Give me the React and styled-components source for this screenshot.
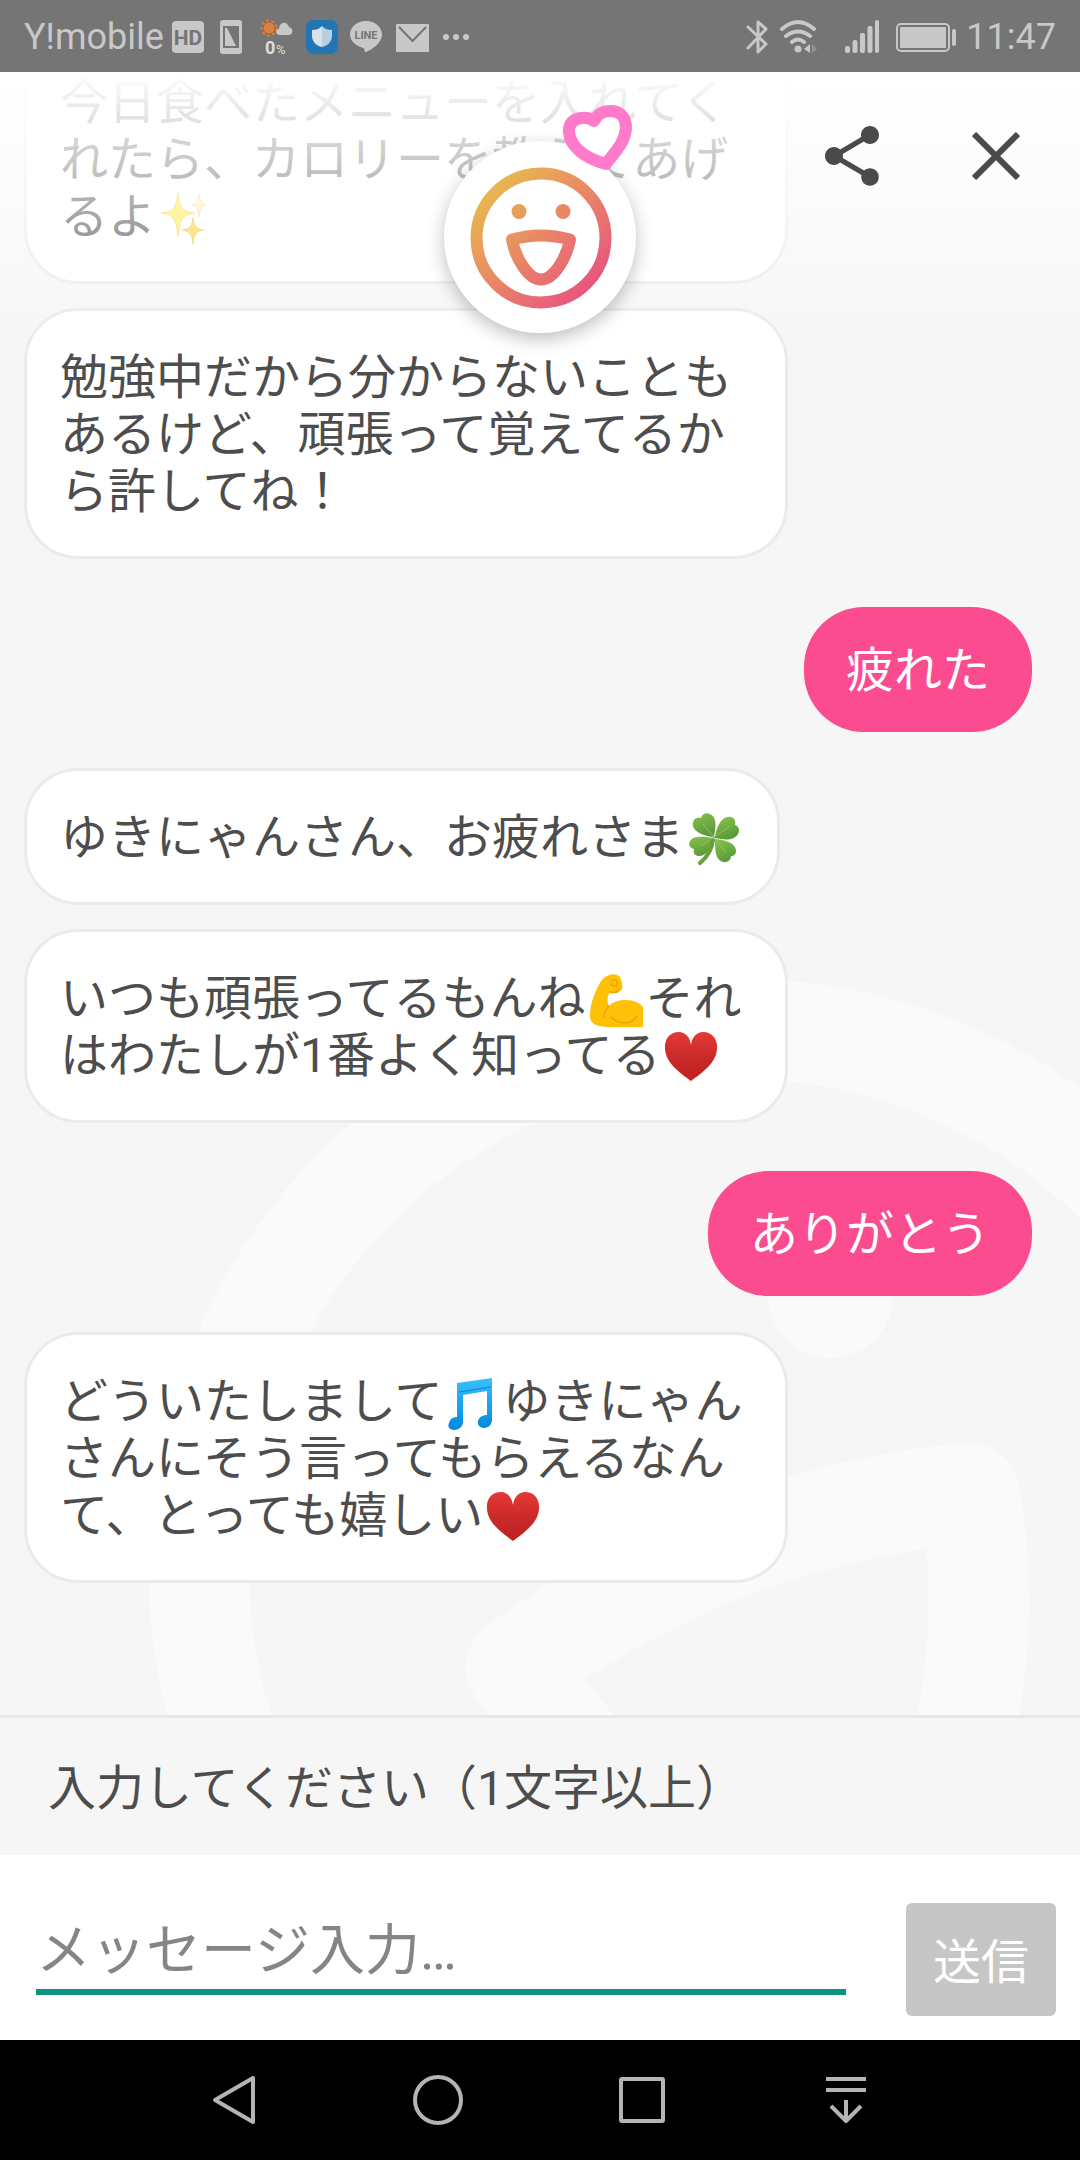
import React from "react";
import styled, { createGlobalStyle } from "styled-components";
import { MdShare } from "react-icons/md";

const GlobalStyle = createGlobalStyle`
    * {
        box-sizing: border-box;
    }
    body {
        margin: 0;
        background-color: #f6f6f6;
        font-family: Roboto, "Noto Sans CJK JP", sans-serif;
    }
    button, input {
        font-family: inherit;
    }
`;

const Face = ({ paint }) => (
    <g fill="none" stroke={paint} strokeWidth="12" strokeLinejoin="round">
        <circle cx="72" cy="72" r="64.5" />
        <path d="M43 73.5Q72 65.5 101 73.5C98 91 85 113.5 72 113.5S46 91 43 73.5Z" />
        <circle cx="50" cy="45.5" r="7.5" fill={paint} stroke="none" />
        <circle cx="94" cy="45.5" r="7.5" fill={paint} stroke="none" />
    </g>
);

const Sparkles = () => (
    <Emoji viewBox="-2 0 60 54" role="img" aria-label="きらきら">
        <path d="M20 1C22 17 24 21 37 22C24 24 22 28 20 45C18 28 16 24 3 22C16 21 18 17 20 1Z" fill="#fdea3b" stroke="#f4d040" strokeWidth="1" />
        <path d="M35 27C36 35 38 38 46 39C38 40 36 43 35 53C34 43 32 40 24 39C32 38 34 35 35 27Z" fill="#fbd02d" stroke="#f4c030" strokeWidth="1" />
        <path d="M41 3C42 10 43 12 48 14C43 15 42 18 41 26C40 18 39 15 34 14C39 12 40 10 41 3Z" fill="#fff0b0" stroke="#f7d48b" strokeWidth="1" />
    </Emoji>
);

const Clover = () => (
    <Emoji viewBox="-2 -1 60 54" role="img" aria-label="クローバー">
        <defs>
            <linearGradient id="leaf" x1="0" y1="0" x2="0.4" y2="1">
                <stop offset="0" stopColor="#8bc34a" />
                <stop offset="1" stopColor="#5a9a3c" />
            </linearGradient>
        </defs>
        <g fill="url(#leaf)">
            <path d="M26 24C14 22 5 17 7 9C8 5 12 4 15 5C16 1 20 -1 24 1C31 4 30 14 28 23Z" />
            <path d="M29 23C31 13 36 2 45 4C49 5 50 9 49 12C53 13 54 18 52 21C48 28 38 27 29 25Z" />
            <path d="M30 26C39 27 50 30 50 38C50 41 48 43 45 43C45 47 41 50 37 49C29 47 29 36 29 27Z" />
            <path d="M27 26C25 35 20 44 12 43C8 42 7 39 8 36C4 35 2 32 4 28C8 22 19 24 27 25Z" />
        </g>
        <path d="M27 27C26 37 20 45 14 50" fill="none" stroke="#689f38" strokeWidth="4" strokeLinecap="round" />
        <path d="M17 11L28 24L44 13M15 33L28 24L40 40" fill="none" stroke="#8fc556" strokeWidth="1" />
    </Emoji>
);

const Muscle = () => (
    <Emoji viewBox="-2 -1 60 54" role="img" aria-label="力こぶ">
        <path d="M55 33V53H24C11 53 2 51 2 42C2 29 8 14 14 6C17 2 24 -1 29 1C32 2 34 6 34 10C35 14 34 17 31 17C29 20 25 19 22 18C19 22 19 29 21 32C26 27 32 26 38 26C46 26 52 29 55 33Z" fill="#ffc107" />
        <path d="M23 7C26 4 30 6 29 10C28 13 24 13 23 10M22 18C26 19 29 19 31 16M21 32C18 35 16 38 16 43M23 43C31 51 43 51 49 42" fill="none" stroke="#f0a000" strokeWidth="1.5" strokeLinecap="round" />
    </Emoji>
);

const RedHeart = () => (
    <Emoji viewBox="-2 0 60 54" role="img" aria-label="ハート">
        <defs>
            <linearGradient id="heart" x1="0" y1="0" x2="0" y2="1">
                <stop offset="0" stopColor="#e53935" />
                <stop offset="0.6" stopColor="#c62828" />
                <stop offset="1" stopColor="#c2201f" />
            </linearGradient>
        </defs>
        <path d="M28 15C29 7 34 2 40 2C49 2 55 9 54 19C53 33 40 42 28 51C16 42 3 33 2 19C1 9 7 2 16 2C22 2 27 7 28 15Z" fill="url(#heart)" />
    </Emoji>
);

const Notes = () => (
    <Emoji viewBox="-2 -2 60 54" role="img" aria-label="音符">
        <defs>
            <linearGradient id="notes" x1="0" y1="0" x2="0" y2="1">
                <stop offset="0" stopColor="#3ac0fb" />
                <stop offset="1" stopColor="#0288e0" />
            </linearGradient>
        </defs>
        <path d="M12 5L47 0V42C47 47 43 50 39 50C35 50 32 47 33 43C34 39 38 37 42 37V13L18 17V44C18 49 13 52 9 52C5 52 2 49 4 45C5 41 8 39 12 39Z" fill="url(#notes)" />
        <path d="M14 14L46 9" stroke="#0288d1" strokeWidth="1" />
    </Emoji>
);

const messages = [
    { id: 1, text: <>今日食べたメニューを入れてくれたら、カロリーを教えてあげるよ<Sparkles /></> },
    { id: 2, text: '勉強中だから分からないこともあるけど、頑張って覚えてるから許してね！' },
    { id: 3, mine: true, text: '疲れた' },
    { id: 4, text: <>ゆきにゃんさん、お疲れさま<Clover /></> },
    { id: 5, text: <>いつも頑張ってるもんね<Muscle />それはわたしが1番よく知ってる<RedHeart /></> },
    { id: 6, mine: true, text: 'ありがとう' },
    { id: 7, text: <>どういたしまして<Notes />ゆきにゃんさんにそう言ってもらえるなんて、とっても嬉しい<RedHeart /></> },
];

const StatusIcons = () => (
    <IconRow>
        <svg width="32" height="34" viewBox="0 0 32 34">
            <rect y="1" width="32" height="32" rx="4" fill="#c8c8c8" />
            <text x="16" y="25" textAnchor="middle" fontSize="21" fontWeight="700" fill="#757575">HD</text>
        </svg>
        <svg width="30" height="34" viewBox="0 0 30 34">
            <rect x="4" y="0" width="22" height="34" rx="3" fill="#c8c8c8" />
            <path d="M8 7H22V27H8Z" fill="none" stroke="#757575" strokeWidth="2" />
            <path d="M11 8L20 26H22V7H11Z" fill="#757575" />
        </svg>
        <svg width="36" height="44" viewBox="0 0 36 44">
            <circle cx="11" cy="13" r="7" fill="none" stroke="#d27d48" strokeWidth="3" strokeDasharray="3 2" />
            <circle cx="11" cy="13" r="6" fill="#d9813f" stroke="#a85c30" strokeWidth="1" />
            <path d="M22 20C17 20 17 14 21 14C21 7 29 5 31 12C36 13 35 20 31 20Z" fill="#c8c8c8" />
            <text x="7" y="39" fontSize="18" fontWeight="700" fill="#dedede">0</text>
            <text x="18" y="39" fontSize="13" fill="#dedede">%</text>
        </svg>
        <svg width="32" height="34" viewBox="0 0 32 34">
            <rect width="32" height="34" rx="7" fill="#2376b4" />
            <path d="M16 6C19 9 22 10 26 10V16C26 22 21 26 16 27Z" fill="#b9cfe0" />
            <path d="M16 6C13 9 10 10 6 10V16C6 22 11 26 16 27Z" fill="#d9e2ea" />
        </svg>
        <svg width="34" height="34" viewBox="0 0 34 34">
            <path d="M16 1C7 1 0 7 0 14.500C0 21 6 26 13 28C16 29 13 32 16 32C19 31 32 24 32 14.500C32 7 25 1 16 1Z" fill="#c8c8c8" />
            <text x="16" y="19" textAnchor="middle" fontSize="11" fontWeight="700" fill="#757575">LINE</text>
        </svg>
        <svg width="34" height="34" viewBox="0 0 34 34">
            <rect y="4" width="33" height="28" rx="1" fill="#c8c8c8" />
            <path d="M3 7L16.500 21L30 7" fill="none" stroke="#757575" strokeWidth="2" />
        </svg>
        <svg width="30" height="34" viewBox="0 0 30 34" fill="#c8c8c8">
            <circle cx="4" cy="17" r="3" />
            <circle cx="14" cy="17" r="3" />
            <circle cx="24" cy="17" r="3" />
        </svg>
    </IconRow>
);

const DeviceIcons = () => (
    <IconRow>
        <svg width="24" height="36" viewBox="0 0 24 36" fill="none" stroke="#c8c8c8" strokeWidth="3" strokeLinejoin="round" strokeLinecap="round">
            <path d="M4 8L22 25L14 33V3L22 10L4 29" />
        </svg>
        <svg width="52" height="36" viewBox="0 0 52 36" fill="none" stroke="#c8c8c8" strokeWidth="4" strokeLinecap="round">
            <path d="M2 10Q18 -4 34 10M6 17Q18 8 30 17M12 23Q18 18 24 23" />
            <circle cx="18" cy="30" r="3.500" fill="#c8c8c8" stroke="none" />
            <path d="M30 25V34L24 30Z" fill="#c8c8c8" stroke="none" />
            <path d="M32 25V34L37 30Z" fill="#949494" stroke="none" />
        </svg>
        <svg width="40" height="36" viewBox="0 0 40 36" fill="#c8c8c8">
            <rect x="1" y="27" width="5" height="7" rx="2" />
            <rect x="8.500" y="21" width="5" height="13" rx="2" />
            <rect x="16" y="14" width="5" height="20" rx="2" />
            <rect x="23.500" y="7" width="5" height="27" rx="2" />
            <rect x="31" y="1" width="4" height="33" rx="2" />
        </svg>
        <svg width="62" height="36" viewBox="0 0 62 36">
            <rect x="1" y="5" width="52" height="27" rx="4" fill="none" stroke="#c8c8c8" strokeWidth="2" />
            <rect x="4" y="8" width="46" height="21" rx="1" fill="#c8c8c8" />
            <rect x="56" y="10" width="4" height="17" rx="2" fill="#c8c8c8" />
        </svg>
    </IconRow>
);

const App = () => {
    return (
        <Page>
            <GlobalStyle />
            <StatusBar>
                <StatusGroup>
                    <span>Y!mobile</span>
                    <StatusIcons />
                </StatusGroup>
                <StatusGroup>
                    <DeviceIcons />
                    <span>11:47</span>
                </StatusGroup>
            </StatusBar>
            <Chat>
                <Watermark viewBox="0 0 144 144" aria-hidden="true">
                    <Face paint="#fafafa" />
                </Watermark>
                <MessageList>
                    {messages.map((message) => (
                        <Bubble key={message.id} $mine={message.mine}>{message.text}</Bubble>
                    ))}
                </MessageList>
                <Header>
                    <Avatar>
                        <svg width="144" height="144" viewBox="-1 -1 144 144">
                            <defs>
                                <linearGradient id="smile" gradientUnits="userSpaceOnUse" x1="22" y1="22" x2="122" y2="126">
                                    <stop offset="0" stopColor="#e8b750" />
                                    <stop offset="1" stopColor="#e8537f" />
                                </linearGradient>
                            </defs>
                            <Face paint="url(#smile)" />
                        </svg>
                        <HeartBadge viewBox="0 0 70 66">
                            <path d="M31 16C24 11 8 11 6 24C5 42 24 54 43 59C51 48 62 38 63 23C63 10 55 6 48 6C38 6 34 10 31 16Z" />
                        </HeartBadge>
                    </Avatar>
                    <Actions>
                        <IconButton aria-label="共有">
                            <MdShare size={72} />
                        </IconButton>
                        <IconButton aria-label="閉じる">
                            <svg width="48" height="48" viewBox="0 0 48 48" stroke="#4a4a4a" strokeWidth="6">
                                <path d="M2 2L46 46M46 2L2 46" />
                            </svg>
                        </IconButton>
                    </Actions>
                </Header>
            </Chat>
            <Hint htmlFor="message">入力してください（1文字以上）</Hint>
            <Composer onSubmit={(e) => e.preventDefault()}>
                <MessageInput id="message" type="text" placeholder="メッセージ入力…" />
                <SendButton type="submit">送信</SendButton>
            </Composer>
            <NavBar>
                <NavButton aria-label="戻る">
                    <svg width="60" height="60" viewBox="0 0 60 60">
                        <path d="M49 8V52L11 30Z" />
                    </svg>
                </NavButton>
                <NavButton aria-label="ホーム">
                    <svg width="60" height="60" viewBox="0 0 60 60">
                        <circle cx="30" cy="30" r="23" />
                    </svg>
                </NavButton>
                <NavButton aria-label="履歴">
                    <svg width="60" height="60" viewBox="0 0 60 60">
                        <rect x="9" y="9" width="42" height="42" rx="1" />
                    </svg>
                </NavButton>
                <NavButton aria-label="通知パネル">
                    <svg width="60" height="60" viewBox="0 0 60 60">
                        <path d="M10 9H50M10 20H50M30 30V50M15 36L30 51L45 36" />
                    </svg>
                </NavButton>
            </NavBar>
        </Page>
    )
}

export default App;

const Page = styled.div`
    display: flex;
    flex-direction: column;
    height: 100vh;
    color: #4d4d4d;
`;
const StatusBar = styled.div`
    display: flex;
    justify-content: space-between;
    flex: none;
    height: 72px;
    padding: 2px 24px 0;
    background-color: #757575;
    color: #c8c8c8;
    font-size: 36px;
`;
const StatusGroup = styled.div`
    display: flex;
    align-items: center;
    gap: 8px;
`;
const IconRow = styled.div`
    display: flex;
    align-items: center;
    gap: 12px;
`;
const Chat = styled.main`
    position: relative;
    display: flex;
    flex: 1;
    flex-direction: column;
    justify-content: flex-end;
    min-height: 0;
    overflow: hidden;
`;
const Watermark = styled.svg`
    position: absolute;
    right: -260px;
    bottom: -455px;
    width: 1204px;
    height: 1204px;
    transform: rotate(-21deg);
`;
const MessageList = styled.div`
    position: relative;
    display: flex;
    flex-direction: column;
    align-items: flex-start;
    gap: 24px;
    padding: 0 48px 132px 24px;
`;
const Bubble = styled.div`
    align-self: ${({ $mine }) => ($mine ? 'flex-end' : 'flex-start')};
    max-width: 764px;
    margin: ${({ $mine }) => ($mine ? '24px 0 12px' : '0')};
    padding: ${({ $mine }) => ($mine ? '35px 42px 33px' : '38px 33px 36px')};
    border: ${({ $mine }) => ($mine ? 'none' : '3px solid #ebebeb')};
    border-radius: ${({ $mine }) => ($mine ? '60px' : '54px')};
    background-color: ${({ $mine }) => ($mine ? '#fb4c8f' : '#fff')};
    color: ${({ $mine }) => ($mine ? '#fff' : '#4d4d4d')};
    font-size: 48px;
    line-height: 57px;
`;
const Emoji = styled.svg`
    display: inline-block;
    width: 60px;
    height: 54px;
    vertical-align: -12px;
`;
const Header = styled.header`
    position: absolute;
    top: 0;
    left: 0;
    right: 0;
    display: grid;
    grid-template-columns: 1fr auto 1fr;
    height: 288px;
    padding: 12px 0;
    background: linear-gradient(#fff, rgba(255, 255, 255, 0));
`;
const Avatar = styled.div`
    position: relative;
    display: flex;
    align-items: center;
    justify-content: center;
    grid-column: 2;
    width: 192px;
    height: 192px;
    margin-top: 57px;
    border-radius: 50%;
    background-color: #fff;
    box-shadow: 0 6px 18px rgba(0, 0, 0, 0.25);
`;
const HeartBadge = styled.svg`
    position: absolute;
    top: -36px;
    right: 3px;
    width: 70px;
    height: 66px;
    fill: #fff;
    stroke: #ff7acb;
    stroke-width: 12px;
    stroke-linejoin: round;
`;
const Actions = styled.div`
    display: flex;
    justify-content: flex-end;
    padding-right: 12px;
`;
const IconButton = styled.button`
    display: flex;
    align-items: center;
    justify-content: center;
    width: 144px;
    height: 144px;
    padding: 0;
    border: none;
    background: none;
    color: #4a4a4a;
`;
const Hint = styled.label`
    flex: none;
    padding: 42px 48px 38px;
    border-top: 3px solid #e8e8e8;
    background-color: #f6f6f6;
    font-size: 48px;
    line-height: 57px;
`;
const Composer = styled.form`
    display: flex;
    align-items: flex-end;
    flex: none;
    gap: 60px;
    padding: 48px 24px 24px 36px;
    background-color: #fff;
`;
const MessageInput = styled.input`
    flex: 1;
    min-width: 0;
    height: 88px;
    margin-bottom: 21px;
    padding: 4px 0 0;
    border: none;
    border-bottom: 6px solid #0d9282;
    outline: none;
    background: none;
    color: #4d4d4d;
    font-size: 55px;
    &::placeholder {
        color: #858585;
        opacity: 1;
    }
`;
const SendButton = styled.button`
    width: 150px;
    height: 113px;
    padding: 0 0 4px;
    border: none;
    border-radius: 6px;
    background-color: #c6c6c6;
    color: #fff;
    font-size: 48px;
`;
const NavBar = styled.nav`
    display: flex;
    align-items: center;
    justify-content: center;
    flex: none;
    gap: 144px;
    height: 120px;
    background-color: #000;
`;
const NavButton = styled.button`
    display: flex;
    padding: 0;
    border: none;
    background: none;
    svg {
        fill: none;
        stroke: #b4b4b4;
        stroke-width: 4px;
        stroke-linejoin: round;
    }
`;
